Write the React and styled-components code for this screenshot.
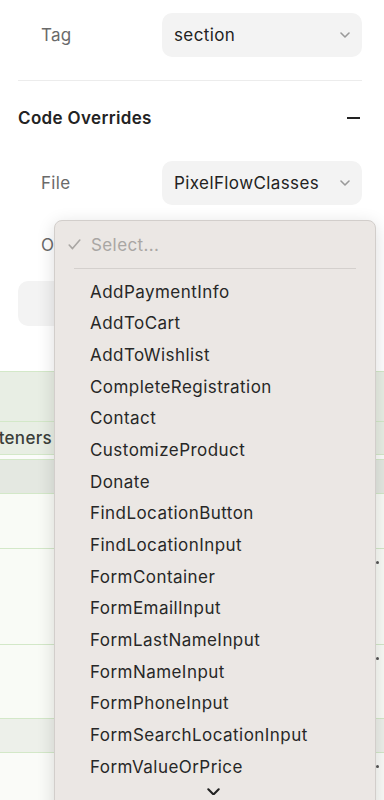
import React from 'react'
import styled, { createGlobalStyle } from 'styled-components'

const Global = createGlobalStyle`
  html, body {
    margin: 0;
    padding: 0;
    background: #ffffff;
    font-family: Inter, 'Noto Sans', 'Liberation Sans', sans-serif;
    -webkit-font-smoothing: antialiased;
  }
`

const Page = styled.div`
  position: relative;
  width: 384px;
  height: 800px;
  overflow: hidden;
  background: #fff;
`

const Panel = styled.div`
  padding: ${p => p.$top ?? 13}px 22px 0 18px;
`

const Row = styled.div`
  display: flex;
  align-items: center;
  height: 44px;
  margin-top: ${p => p.$top || 0}px;
`

const Label = styled.div`
  flex: 1;
  padding-left: 23px;
  font-size: 17px;
  letter-spacing: 0.3px;
  color: #6a6a6a;
`

const SelectBox = styled.div`
  width: 200px;
  height: 44px;
  box-sizing: border-box;
  display: flex;
  align-items: center;
  justify-content: space-between;
  padding: 0 12px 0 12px;
  background: #f3f3f3;
  border-radius: 10px;
  font-size: 17px;
  letter-spacing: 0.4px;
  color: #222;
`

const Divider = styled.div`
  height: 1px;
  background: #ececec;
  margin-top: 23px;
`

const Header = styled.div`
  display: flex;
  align-items: center;
  justify-content: space-between;
  height: 24px;
  margin-top: 25px;
  font-size: 17px;
  letter-spacing: 0.35px;
  font-weight: 600;
  color: #232323;
`

const Minus = styled.div`
  width: 13px;
  height: 2px;
  background: #222;
  margin-right: 2px;
`

const GhostButton = styled.div`
  height: 45px;
  margin-top: 14px;
  border-radius: 10px;
  background: #f3f3f3;
`

const Table = styled.div`
  margin-top: 45px;
`

const TableRow = styled.div`
  display: flex;
  align-items: ${p => (p.$text ? 'center' : 'flex-start')};
  justify-content: space-between;
  height: ${p => p.$h}px;
  box-sizing: border-box;
  background: ${p => p.$bg};
  border-top: 1px solid #d3e8c8;
`

const CutCell = styled.div`
  width: 52px;
  overflow: hidden;
  display: flex;
  justify-content: flex-end;
  white-space: nowrap;
  font-size: 17px;
  letter-spacing: 0.3px;
  font-weight: 500;
  color: #3b3f3a;
`

const Dot = styled.span`
  width: 3px;
  height: 3px;
  border-radius: 50%;
  background: #555;
  margin: 12px 5px 0 0;
`

const Popup = styled.div`
  position: absolute;
  top: 220px;
  left: 54px;
  width: 322px;
  height: 620px;
  box-sizing: border-box;
  background: #ebe7e4;
  border: 1px solid #d2cecb;
  border-radius: 8px;
  box-shadow: 0 4px 18px rgba(0, 0, 0, 0.14);
`

const PopHead = styled.div`
  display: flex;
  align-items: center;
  height: 47px;
  padding-left: 13px;
  font-size: 17px;
  letter-spacing: 0.4px;
  color: #a9a6a3;
  gap: 10px;
`

const Sep = styled.div`
  height: 1px;
  margin: 0 19px;
  background: #d4d0cd;
`

const List = styled.div`
  padding-top: 7px;
`

const Item = styled.div`
  height: 31.67px;
  display: flex;
  align-items: center;
  padding-left: 35px;
  font-size: 17px;
  letter-spacing: 0.45px;
  color: #272727;
`

const More = styled.div`
  display: flex;
  justify-content: center;
  padding-right: 4px;
  margin-top: 5px;
`

const Chevron = ({ color = '#9a9a9a', w = 10 }) => (
  <svg width={w} height={w * 0.6} viewBox="0 0 10 6" fill="none">
    <path d="M1 1l4 4 4-4" stroke={color} strokeWidth="1.6" strokeLinecap="round" strokeLinejoin="round" />
  </svg>
)

const items = [
  'AddPaymentInfo',
  'AddToCart',
  'AddToWishlist',
  'CompleteRegistration',
  'Contact',
  'CustomizeProduct',
  'Donate',
  'FindLocationButton',
  'FindLocationInput',
  'FormContainer',
  'FormEmailInput',
  'FormLastNameInput',
  'FormNameInput',
  'FormPhoneInput',
  'FormSearchLocationInput',
  'FormValueOrPrice',
]

const rows = [
  { h: 50, bg: '#e8eee4' },
  { h: 33, bg: '#e8eee4', text: 'Event Listeners' },
  { h: 5, bg: '#fbfcfa' },
  { h: 34, bg: '#e4e8e1' },
  { h: 55, bg: '#f9fbf6' },
  { h: 96, bg: '#f9fbf6', dot: true },
  { h: 74, bg: '#f9fbf6', dot: true },
  { h: 34, bg: '#edf0ea' },
  { h: 60, bg: '#fafbf8', dot: true },
]

export default function App() {
  return (
    <Page>
      <Global />
      <Panel>
        <Row>
          <Label>Tag</Label>
          <SelectBox>
            section
            <Chevron />
          </SelectBox>
        </Row>
        <Divider />
        <Header>
          Code Overrides
          <Minus />
        </Header>
        <Row $top={31}>
          <Label>File</Label>
          <SelectBox>
            PixelFlowClasses
            <Chevron />
          </SelectBox>
        </Row>
        <Row $top={18}>
          <Label>Override</Label>
          <SelectBox />
        </Row>
      </Panel>
      <Panel $top={0}>
        <GhostButton />
      </Panel>
      <Table>
        {rows.map((r, i) => (
          <TableRow key={i} $h={r.h} $bg={r.bg} $text={!!r.text}>
            <CutCell>{r.text || ''}</CutCell>
            {r.dot ? <Dot /> : <span />}
          </TableRow>
        ))}
      </Table>
      <Popup>
        <PopHead>
          <svg width="13" height="11" viewBox="0 0 13 11" fill="none">
            <path d="M1.2 6l3.3 3.6L11.8 1" stroke="#a9a6a3" strokeWidth="1.6" strokeLinecap="round" strokeLinejoin="round" />
          </svg>
          Select...
        </PopHead>
        <Sep />
        <List>
          {items.map(t => (
            <Item key={t}>{t}</Item>
          ))}
        </List>
        <More>
          <Chevron color="#222" w={13} />
        </More>
      </Popup>
    </Page>
  )
}
